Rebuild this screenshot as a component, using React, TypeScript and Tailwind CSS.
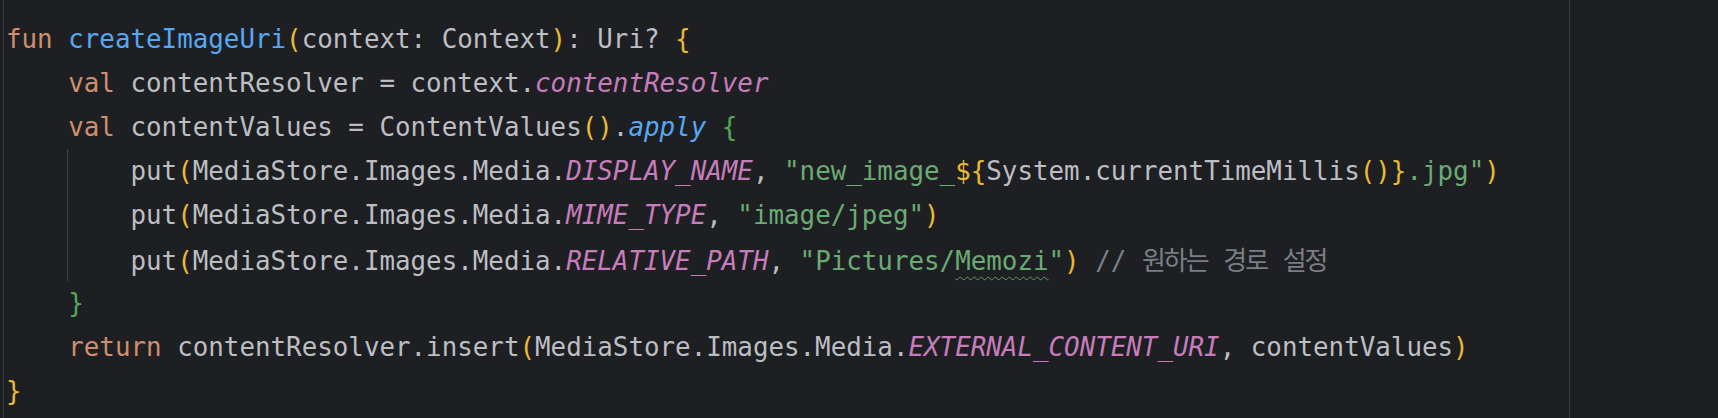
import React from 'react'

// token colours (IntelliJ dark)
const kw = 'text-[#cf8e6d]'
const fn = 'text-[#56a8f5]'
const prop = 'text-[#c77dbb] italic'
const str = 'text-[#6aab73]'
const gold = 'text-[#e8ba36]'
const green = 'text-[#54a857]'
const cmt = 'text-[#7a7e85]'

function Ko({ children }: { children: string }) {
  return (
    <span className="font-['Noto_Sans_CJK_KR',sans-serif] text-[26px] tracking-[-2px]">{children}</span>
  )
}

function Line({ children }: { children?: React.ReactNode }) {
  return <div className="h-[44px] whitespace-pre">{children}</div>
}

export default function App() {
  return (
    <div className="flex h-[418px] w-[1718px] overflow-hidden bg-[#1e1f22] font-['DejaVu_Sans_Mono',monospace] text-[25.85px] leading-[44px] text-[#bcbec4]">
      <div className="w-[3px]" />
      <div className="w-px bg-[#393b40]" />
      <div className="w-[1565px] pl-[2px] pt-[17px]">
        <Line>
          <span className={kw}>fun</span> <span className={fn}>createImageUri</span>
          <span className={gold}>(</span>context: Context<span className={gold}>)</span>: Uri? <span className={gold}>{'{'}</span>
        </Line>
        <Line>
          {'    '}<span className={kw}>val</span> contentResolver = context.<span className={prop}>contentResolver</span>
        </Line>
        <Line>
          {'    '}<span className={kw}>val</span> contentValues = ContentValues<span className={gold}>()</span>.
          <span className={`${fn} italic`}>apply</span> <span className={green}>{'{'}</span>
        </Line>
        <div className="relative">
          <div className="absolute bottom-0 left-[61px] top-0 w-px bg-[#3b4a3b]" />
          <Line>
            {'        '}put<span className={gold}>(</span>MediaStore.Images.Media.<span className={prop}>DISPLAY_NAME</span>,{' '}
            <span className={str}>"new_image_</span>
            <span className={gold}>{'${'}</span>System.currentTimeMillis<span className={gold}>()</span>
            <span className={gold}>{'}'}</span>
            <span className={str}>.jpg"</span>
            <span className={gold}>)</span>
          </Line>
          <Line>
            {'        '}put<span className={gold}>(</span>MediaStore.Images.Media.<span className={prop}>MIME_TYPE</span>,{' '}
            <span className={str}>"image/jpeg"</span>
            <span className={gold}>)</span>
          </Line>
          <Line>
            {'        '}put<span className={gold}>(</span>MediaStore.Images.Media.<span className={prop}>RELATIVE_PATH</span>,{' '}
            <span className={str}>
              "Pictures/
              <span className="underline decoration-[#659c6b] decoration-wavy decoration-1 underline-offset-[6px]">Memozi</span>"
            </span>
            <span className={gold}>)</span>{' '}
            <span className={cmt}>
              // <Ko>원하는</Ko> <Ko>경로</Ko> <Ko>설정</Ko>
            </span>
          </Line>
        </div>
        <Line>
          {'    '}<span className={green}>{'}'}</span>
        </Line>
        <Line>
          {'    '}<span className={kw}>return</span> contentResolver.insert<span className={gold}>(</span>MediaStore.Images.Media.
          <span className={prop}>EXTERNAL_CONTENT_URI</span>, contentValues<span className={gold}>)</span>
        </Line>
        <Line>
          <span className={gold}>{'}'}</span>
        </Line>
      </div>
      <div className="w-px bg-[#393b40]" />
      <div className="flex-1" />
    </div>
  )
}
